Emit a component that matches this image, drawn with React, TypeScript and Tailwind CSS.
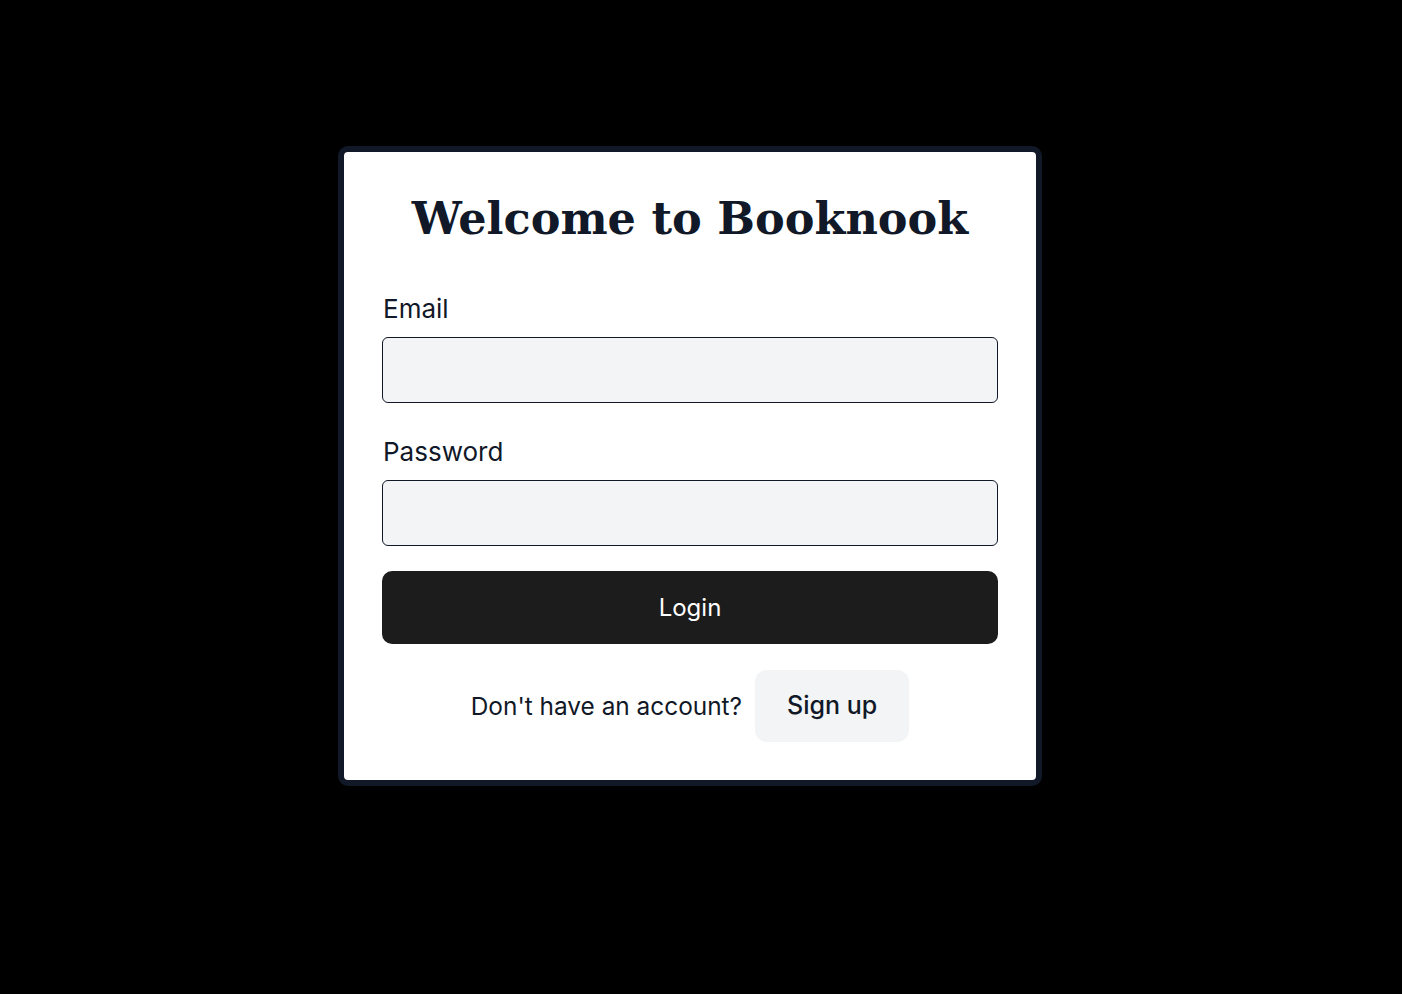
import { useState } from "react";

const App = () => {
    const [email, setEmail] = useState("");
    const [password, setPassword] = useState("");

    return (
        <div
            className="min-h-screen w-full bg-black pt-[146px] pr-[22px] flex justify-center items-start"
            style={{ fontFamily: "Inter, 'Noto Sans', sans-serif" }}
        >
            <div className="w-[704px] rounded-[10px] border-[6px] border-[#111827] bg-white px-[38px] pt-[43px] pb-[38px]">
                {/* Title */}
                <h1
                    className="text-center text-[44.6px] leading-[48px] font-bold text-[#111827] whitespace-nowrap"
                    style={{ fontFamily: "'DejaVu Serif', Georgia, serif" }}
                >
                    Welcome to Booknook
                </h1>

                {/* Form */}
                <form className="mt-[50px]" onSubmit={(e) => e.preventDefault()}>
                    <label className="block text-[26px] leading-8 text-[#111827] mb-3 pl-px">Email</label>
                    <input
                        type="email"
                        value={email}
                        onChange={(e) => setEmail(e.target.value)}
                        className="block w-full h-[66px] rounded-md border border-[#111827] bg-gray-100 px-4 text-2xl outline-none"
                    />

                    <label className="block text-[26px] leading-8 text-[#111827] mt-[33px] mb-3 pl-px">Password</label>
                    <input
                        type="password"
                        value={password}
                        onChange={(e) => setPassword(e.target.value)}
                        className="block w-full h-[66px] rounded-md border border-[#111827] bg-gray-100 px-4 text-2xl outline-none"
                    />

                    <button
                        type="submit"
                        className="mt-[25px] w-full h-[73px] rounded-[10px] bg-[#1c1c1c] text-2xl text-white"
                    >
                        Login
                    </button>
                </form>

                {/* Sign up */}
                <div className="mt-[26px] flex items-center justify-center gap-[13px]">
                    <span className="text-[24.4px] text-[#111827]">Don't have an account?</span>
                    <button className="h-[72px] rounded-xl bg-gray-100 px-[32px] text-[25px] font-medium text-[#111827]">
                        Sign up
                    </button>
                </div>
            </div>
        </div>
    );
};

export default App;
